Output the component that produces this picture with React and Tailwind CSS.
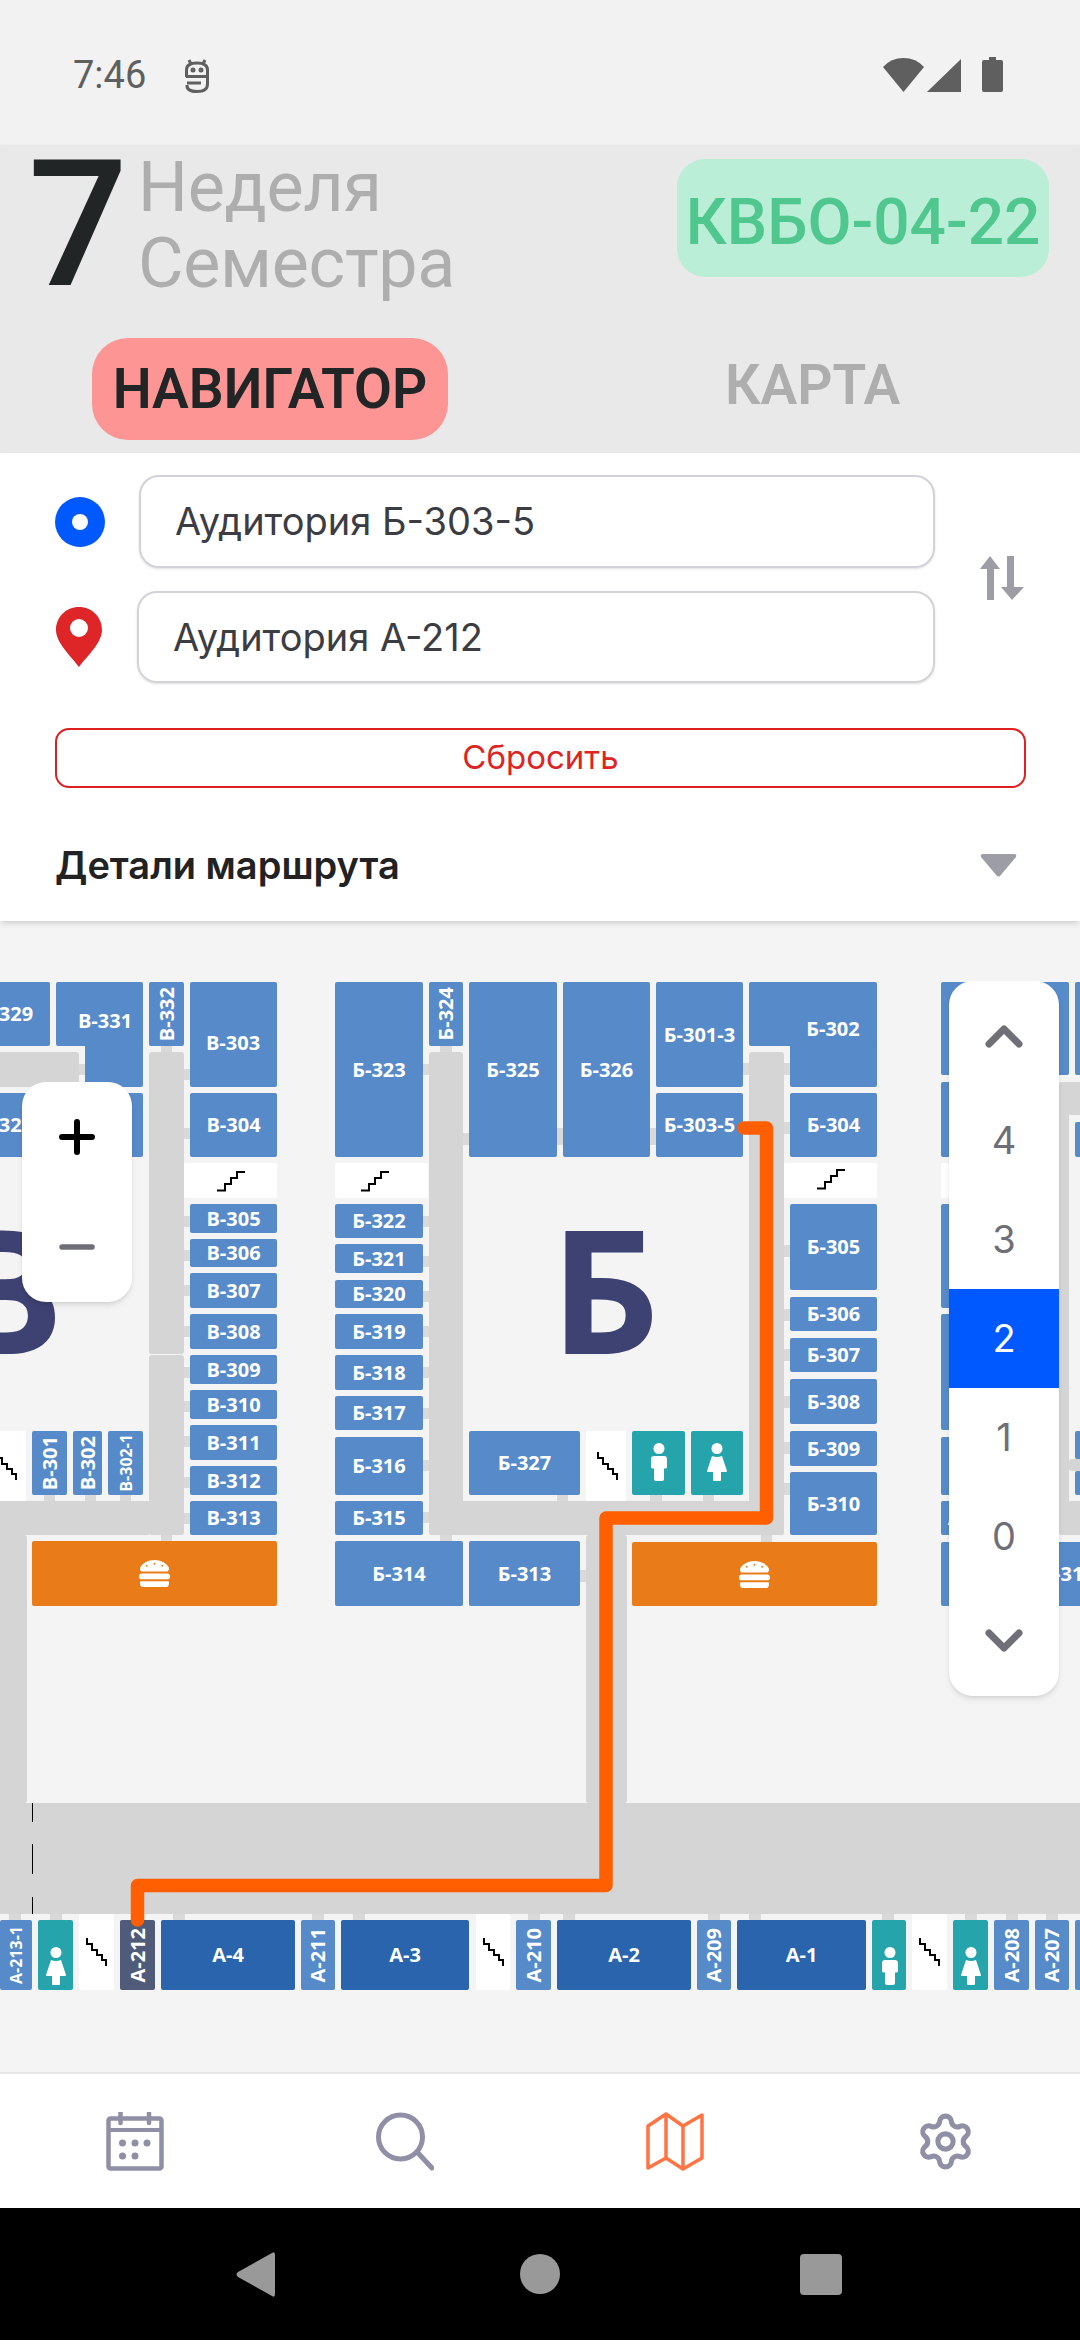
import React from 'react';
import { Settings } from 'lucide-react';
import { FaHamburger } from 'react-icons/fa';

// all map data is in screen coordinates, MAP_TOP is subtracted when drawing
const MAP_TOP = 921;

const corridors = [
  [-10, 1052, 79, 1087],
  [149, 1052, 184, 1354],
  [149, 1355, 184, 1535],
  [-10, 1501, 150, 1535],
  [-10, 1535, 27, 1803],
  [429, 1052, 463, 1535],
  [429, 1501, 784, 1535],
  [749, 1052, 784, 1535],
  [586, 1535, 627, 1803],
  [-10, 1803, 1090, 1914],
  [1059, 1082, 1069, 1535],
  [1059, 1082, 1090, 1115],
  [1059, 1501, 1090, 1535],
  [1069, 1459, 1090, 1471],
];

// door stubs between rooms and corridors
const stubs = [
  [79, 1064, 85, 1075],
  ...[1069, 1128, 1216, 1250, 1285, 1326, 1367, 1401, 1436, 1477, 1513].map((y) => [184, y, 190, y + 11]),
  [161, 1046, 172, 1052], [161, 1535, 172, 1541],
  [44, 1495, 55, 1501], [85, 1495, 96, 1501], [120, 1495, 131, 1501],
  ...[1064, 1216, 1256, 1291, 1326, 1367, 1408, 1460, 1512].map((y) => [423, y, 429, y + 11]),
  [440, 1046, 452, 1052], [440, 1535, 452, 1541],
  [463, 1133, 469, 1145], [557, 1128, 563, 1145], [650, 1128, 656, 1145],
  [557, 1495, 568, 1501], [580, 1570, 586, 1582],
  [743, 1063, 749, 1075], [743, 1122, 749, 1134],
  ...[1063, 1122, 1245, 1309, 1349, 1396, 1442, 1483].map((y) => [784, y, 790, y + 12]),
  [761, 1535, 772, 1542], [650, 1495, 662, 1501], [703, 1495, 714, 1501],
  ...[9, 50, 173, 312, 353, 528, 563, 708, 749, 882, 965, 1006, 1046].map((x) => [x, 1914, x + 12, 1920]),
];

const rooms = [
  [-38, 982, 50, 1046, 'В-329'],
  [56, 982, 143, 1046],
  [85, 1040, 143, 1087],
  [149, 982, 184, 1046, 'В-332', 'v'],
  [190, 982, 277, 1087],
  [-38, 1093, 50, 1157, 'В-328'],
  [56, 1093, 143, 1157],
  [190, 1093, 277, 1157, 'В-304'],
  [190, 1204, 277, 1233, 'В-305'],
  [190, 1239, 277, 1267, 'В-306'],
  [190, 1273, 277, 1308, 'В-307'],
  [190, 1314, 277, 1349, 'В-308'],
  [190, 1355, 277, 1384, 'В-309'],
  [190, 1390, 277, 1419, 'В-310'],
  [190, 1425, 277, 1460, 'В-311'],
  [190, 1466, 277, 1495, 'В-312'],
  [190, 1501, 277, 1535, 'В-313'],
  [32, 1431, 67, 1495, 'В-301', 'v'],
  [73, 1431, 102, 1495, 'В-302', 'v'],
  [108, 1431, 143, 1495, 'В-302-1', 'vs'],

  [335, 982, 423, 1157, 'Б-323'],
  [429, 982, 463, 1046, 'Б-324', 'v'],
  [469, 982, 557, 1157, 'Б-325'],
  [563, 982, 650, 1157, 'Б-326'],
  [656, 982, 743, 1087, 'Б-301-3'],
  [656, 1093, 743, 1157, 'Б-303-5'],
  [335, 1204, 423, 1238, 'Б-322'],
  [335, 1244, 423, 1273, 'Б-321'],
  [335, 1280, 423, 1308, 'Б-320'],
  [335, 1314, 423, 1349, 'Б-319'],
  [335, 1355, 423, 1390, 'Б-318'],
  [335, 1396, 423, 1430, 'Б-317'],
  [335, 1437, 423, 1495, 'Б-316'],
  [335, 1501, 423, 1535, 'Б-315'],
  [335, 1541, 463, 1606, 'Б-314'],
  [469, 1541, 580, 1606, 'Б-313'],
  [469, 1431, 580, 1495, 'Б-327'],
  [749, 982, 877, 1046],
  [790, 1040, 877, 1087],
  [790, 1093, 877, 1157, 'Б-304'],
  [790, 1204, 877, 1290, 'Б-305'],
  [790, 1297, 877, 1331, 'Б-306'],
  [790, 1338, 877, 1372, 'Б-307'],
  [790, 1379, 877, 1424, 'Б-308'],
  [790, 1431, 877, 1466, 'Б-309'],
  [790, 1472, 877, 1535, 'Б-310'],

  // right building, mostly behind the floor picker
  [941, 982, 1069, 1075],
  [1075, 982, 1090, 1075],
  [941, 1082, 1059, 1157],
  [1075, 1122, 1090, 1157],
  [941, 1204, 1059, 1308],
  [941, 1314, 1059, 1430],
  [941, 1437, 1059, 1495],
  [1075, 1431, 1090, 1459],
  [1075, 1471, 1090, 1495],
  [941, 1501, 1009, 1535, 'А-314'],
  [941, 1542, 1194, 1606, 'А-315'],

  [0, 1920, 32, 1990, 'А-213-1', 'vs'],
  [301, 1920, 335, 1990, 'А-211', 'v'],
  [516, 1920, 551, 1990, 'А-210', 'v'],
  [697, 1920, 731, 1990, 'А-209', 'v'],
  [994, 1920, 1029, 1990, 'А-208', 'v'],
  [1035, 1920, 1069, 1990, 'А-207', 'v'],
  [1075, 1920, 1110, 1990],
];

const darkRooms = [
  [161, 295, 'А-4'],
  [341, 469, 'А-3'],
  [557, 691, 'А-2'],
  [737, 866, 'А-1'],
];

const stairs = [
  [184, 1163, 277, 1198, 'up', 217, 1170],
  [335, 1163, 428, 1198, 'up', 361, 1170],
  [784, 1163, 877, 1198, 'up', 817, 1168],
  [941, 1163, 949, 1198],
  [-20, 1431, 26, 1501, 'down', -4, 1452],
  [586, 1431, 626, 1501, 'down', 597, 1452],
  [79, 1914, 114, 1990, 'down', 86, 1938],
  [476, 1914, 510, 1990, 'down', 483, 1938],
  [912, 1914, 947, 1990, 'down', 919, 1938],
];

const toilets = [
  [632, 1431, 685, 1495, 'm', 651, 1443],
  [691, 1431, 743, 1495, 'f', 707, 1443],
  [38, 1920, 73, 1990, 'f', 46, 1947],
  [872, 1920, 906, 1990, 'm', 882, 1947],
  [953, 1920, 988, 1990, 'f', 961, 1947],
];

const box = (x1, y1, x2, y2) => ({ left: x1, top: y1 - MAP_TOP, width: x2 - x1, height: y2 - y1 });

const RoomLabel = ({ text, mode }) => {
  if (mode === 'v' || mode === 'vs') {
    return (
      <span className={`[writing-mode:vertical-rl] rotate-180 whitespace-nowrap font-bold leading-none ${mode === 'vs' ? 'text-[16px]' : 'text-[20px]'}`}>
        {text}
      </span>
    );
  }
  return <span className="whitespace-nowrap text-[20px] font-bold leading-none">{text}</span>;
};

const Room = ({ x1, y1, x2, y2, label, mode, color = 'bg-[#578ac9]' }) => (
  <div className={`absolute flex items-center justify-center rounded-[2px] text-white ${color}`} style={box(x1, y1, x2, y2)}>
    {label && <RoomLabel text={label} mode={mode} />}
  </div>
);

const FloatingLabel = ({ cx, cy, text }) => (
  <div className="absolute flex h-[30px] w-[120px] items-center justify-center text-white" style={{ left: cx - 60, top: cy - MAP_TOP - 15 }}>
    <RoomLabel text={text} />
  </div>
);

const StairsUp = () => (
  <svg width="28" height="22" viewBox="0 0 28 22" fill="none" stroke="#000" strokeWidth="2">
    <path d="M0 20.5H8V14H14V8H20V2H28" />
  </svg>
);

const StairsDown = () => (
  <svg width="22" height="28" viewBox="0 0 22 28" fill="none" stroke="#000" strokeWidth="2">
    <path d="M1 0V6H6V12H11V17H16V22H20V28" />
  </svg>
);

const Male = () => (
  <svg width="16" height="38" viewBox="0 0 16 38" fill="#fff">
    <circle cx="8" cy="5.5" r="5.5" />
    <path d="M3 13H13Q16 13 16 16V24Q16 25.5 14 25.5H13V36Q13 38 11 38H5Q3 38 3 36V25.5H2Q0 25.5 0 24V16Q0 13 3 13Z" />
  </svg>
);

const Female = () => (
  <svg width="20" height="38" viewBox="0 0 20 38" fill="#fff">
    <circle cx="10" cy="5.5" r="5.5" />
    <path d="M5 13Q10 15 15 13L20 28Q20 29 19 29H14V37Q14 38 13 38H7Q6 38 6 37V29H1Q0 29 0 28Z" />
  </svg>
);

const Map3rdFloor = () => (
  <>
    {corridors.map(([x1, y1, x2, y2], i) => (
      <div key={`c${i}`} className="absolute rounded-[3px] bg-[#d5d5d5]" style={box(x1, y1, x2, y2)} />
    ))}
    {stubs.map(([x1, y1, x2, y2], i) => (
      <div key={`s${i}`} className="absolute bg-[#d9d9d9]" style={box(x1, y1, x2, y2)} />
    ))}

    {/* dashed wall on the left of the main hall */}
    <div className="absolute left-[32px] top-[882px] h-[19px] w-px bg-black" />
    <div className="absolute left-[32px] top-[923px] h-[30px] w-px bg-black" />
    <div className="absolute left-[32px] top-[976px] h-[17px] w-px bg-black" />

    <div className="absolute top-[303px] right-[1016px] whitespace-nowrap text-[172px] font-bold leading-[126px] text-[#3e4272]">В</div>
    <div className="absolute top-[303px] left-[550px] whitespace-nowrap text-[172px] font-bold leading-[126px] text-[#3e4272]">Б</div>

    {rooms.map(([x1, y1, x2, y2, label, mode], i) => (
      <Room key={`r${i}`} x1={x1} y1={y1} x2={x2} y2={y2} label={label} mode={mode} />
    ))}
    <FloatingLabel cx={105} cy={1021} text="В-331" />
    <FloatingLabel cx={233} cy={1043} text="В-303" />
    <FloatingLabel cx={833} cy={1029} text="Б-302" />

    {darkRooms.map(([x1, x2, label]) => (
      <Room key={label} x1={x1} y1={1920} x2={x2} y2={1990} label={label} color="bg-[#2964ac]" />
    ))}
    <Room x1={120} y1={1920} x2={155} y2={1990} label="А-212" mode="v" color="bg-[#4f5b78]" />

    {stairs.map(([x1, y1, x2, y2, dir, ix, iy], i) => (
      <div key={`st${i}`} className="absolute rounded-[2px] bg-white" style={box(x1, y1, x2, y2)}>
        {dir && (
          <div className="absolute" style={{ left: ix - x1, top: iy - y1 }}>
            {dir === 'up' ? <StairsUp /> : <StairsDown />}
          </div>
        )}
      </div>
    ))}

    {toilets.map(([x1, y1, x2, y2, kind, ix, iy], i) => (
      <div key={`t${i}`} className="absolute rounded-[2px] bg-[#25a5ab]" style={box(x1, y1, x2, y2)}>
        <div className="absolute flex" style={{ left: ix - x1, top: iy - y1 }}>
          {kind === 'm' ? <Male /> : <Female />}
        </div>
      </div>
    ))}

    <div className="absolute left-[32px] top-[620px] flex h-[65px] w-[245px] items-center justify-center rounded-[2px] bg-[#e97c18] text-white">
      <FaHamburger size={31} />
    </div>
    <div className="absolute left-[632px] top-[621px] flex h-[64px] w-[245px] items-center justify-center rounded-[2px] bg-[#e97c18] text-white">
      <FaHamburger size={31} />
    </div>

    {/* route */}
    <svg className="absolute left-0 top-0" width="1080" height="1151" viewBox="0 921 1080 1151" fill="none">
      <path
        d="M744 1128H766.5V1518H606V1885.5H137.5V1920"
        stroke="#ff5f00"
        strokeWidth="13.5"
        strokeLinecap="round"
        strokeLinejoin="round"
      />
    </svg>
  </>
);

const ZoomControl = () => (
  <div className="absolute left-[22px] top-[161px] flex h-[220px] w-[110px] flex-col items-center rounded-[24px] bg-white shadow-md">
    <svg className="mt-[37px]" width="36" height="36" viewBox="0 0 36 36" stroke="#000" strokeWidth="6" strokeLinecap="round">
      <path d="M3 18H33M18 3V33" />
    </svg>
    <svg className="mt-[89px]" width="36" height="6" viewBox="0 0 36 6" stroke="#6f6f78" strokeWidth="5.5" strokeLinecap="round">
      <path d="M3 3H33" />
    </svg>
  </div>
);

const FloorPicker = () => (
  <div className="absolute left-[949px] top-[60px] flex w-[110px] flex-col rounded-[24px] bg-white font-['Inter',sans-serif] shadow-md">
    <div className="flex h-[110px] items-center justify-center">
      <svg width="38" height="24" viewBox="0 0 38 24" fill="none" stroke="#6f6f78" strokeWidth="7" strokeLinecap="round" strokeLinejoin="round">
        <path d="M4 20L19 5L34 20" />
      </svg>
    </div>
    {[4, 3, 2, 1, 0].map((floor) => (
      <div
        key={floor}
        className={`flex h-[99px] items-center justify-center text-[38px] ${floor === 2 ? 'bg-[#0059ff] text-white' : 'text-[#6f6f78]'}`}
      >
        {floor}
      </div>
    ))}
    <div className="flex h-[110px] items-center justify-center">
      <svg width="38" height="24" viewBox="0 0 38 24" fill="none" stroke="#6f6f78" strokeWidth="7" strokeLinecap="round" strokeLinejoin="round">
        <path d="M4 4L19 19L34 4" />
      </svg>
    </div>
  </div>
);

const StatusBar = () => (
  <div className="flex h-[145px] items-start justify-between bg-[#f2f2f2] pl-[73px] pr-[77px] pt-[57px]">
    <div className="flex items-center">
      <span className="text-[38px] leading-[36px] text-[#5f5f5f]">7:46</span>
      <svg className="ml-[38px]" width="26" height="35" viewBox="0 0 26 35" fill="none" stroke="#5f5f5f" strokeWidth="3">
        <path d="M5 2L7 6M21 2L19 6" />
        <path d="M2.5 19V12Q2.5 5 13 5T23.5 12V26Q23.5 33.5 13 33.5T3 27" />
        <path d="M2 18.5H23" />
        <path d="M3 25H17" />
        <circle cx="9" cy="12" r="1" fill="#5f5f5f" />
        <circle cx="17" cy="12" r="1" fill="#5f5f5f" />
      </svg>
    </div>
    <div className="flex items-end">
      <svg width="41" height="34" viewBox="0 0 41 34" fill="#5f5f5f">
        <path d="M20.5 34L0 9Q8 0 20.5 0T41 9Z" />
      </svg>
      <svg className="ml-[3px]" width="34" height="33" viewBox="0 0 34 33" fill="#5f5f5f">
        <path d="M34 0V33H0Z" />
      </svg>
      <svg className="ml-[21px]" width="21" height="35" viewBox="0 0 21 35" fill="#5f5f5f">
        <path d="M7 0H14V3H19Q21 3 21 5V33Q21 35 19 35H2Q0 35 0 33V5Q0 3 2 3H7Z" />
      </svg>
    </div>
  </div>
);

const Header = () => (
  <div className="relative z-10 h-[308px] bg-[#e9e9e9] shadow-sm">
    <div className="flex items-start justify-between pl-[28px] pr-[31px]">
      <div className="flex">
        <div className="mt-[18px] text-[176px] font-medium leading-[125px] text-[#212525]">7</div>
        <div className="ml-[10px] mt-[4px] text-[70px] leading-[76px] tracking-[-0.3px] text-[#aeaeae]">
          <div>Неделя</div>
          <div>Семестра</div>
        </div>
      </div>
      <div className="mt-[14px] flex h-[118px] w-[372px] items-center justify-center rounded-[28px] bg-[#baeed7] pt-[10px] text-[64px] font-medium leading-none text-[#4fc78f]">
        КВБО-04-22
      </div>
    </div>
    <div className="relative mt-[37px] flex items-center">
      <div className="ml-[92px] flex h-[102px] w-[356px] items-center justify-center rounded-[36px] bg-[#fd9595] text-[55px] font-semibold leading-none text-[#212525]">
        НАВИГАТОР
      </div>
      <div className="ml-[277px] -translate-y-[4px] text-[55px] font-semibold leading-none text-[#aeaeae]">КАРТА</div>
    </div>
  </div>
);

const RouteForm = () => (
  <div className="relative z-10 h-[468px] bg-white px-[55px] font-['Inter',sans-serif] shadow-md">
    <div className="flex">
      <div className="w-[880px]">
        <div className="mt-[22px] flex items-center">
          <div className="flex h-[50px] w-[50px] items-center justify-center rounded-full bg-[#0059ff]">
            <div className="h-[16px] w-[16px] rounded-full bg-white" />
          </div>
          <div className="ml-[34px] flex h-[93px] w-[796px] items-center rounded-[20px] border-2 border-[#d2d2d8] pl-[34px] text-[38px] text-[#3c3c43] shadow-sm">
            Аудитория Б-303-5
          </div>
        </div>
        <div className="mt-[23px] flex items-center">
          <svg className="ml-px" width="46" height="60" viewBox="0 0 46 60">
            <path d="M23 0C10 0 0 10 0 23C0 36 15 49 23 60C31 49 46 36 46 23C46 10 36 0 23 0Z" fill="#de2528" />
            <circle cx="23" cy="21" r="9" fill="#fff" />
          </svg>
          <div className="ml-[35px] flex h-[92px] w-[798px] items-center rounded-[20px] border-2 border-[#d2d2d8] pl-[34px] text-[38px] text-[#3c3c43] shadow-sm">
            Аудитория А-212
          </div>
        </div>
      </div>
      <svg className="ml-[44px] mt-[103px]" width="46" height="44" viewBox="0 0 46 44" fill="#9d9da5">
        <path d="M11 0L21 13H15V44H8V13H1Z" />
        <path d="M28 0H35V31H45L33 44L22 31H28Z" />
      </svg>
    </div>
    <div className="mt-[45px] flex h-[60px] w-[971px] items-center justify-center rounded-[14px] border-2 border-[#e02020] text-[33px] text-[#de2323]">
      Сбросить
    </div>
    <div className="mt-[52px] flex w-[962px] items-center justify-between">
      <span className="text-[38px] font-semibold leading-[50px] text-[#222]">Детали маршрута</span>
      <svg width="37" height="23" viewBox="0 0 37 23" fill="#9d9da5">
        <path d="M3 0H34Q37 0 36 3L20 22Q18.5 23 17 22L1 3Q0 0 3 0Z" />
      </svg>
    </div>
  </div>
);

const BottomNav = () => (
  <div className="relative flex h-[136px] border-t-2 border-[#e6e6e6] bg-white">
    <svg className="absolute left-[106px] top-[38px]" width="58" height="59" viewBox="0 0 58 59" fill="none" stroke="#8f8fa5" strokeWidth="4.5">
      <rect x="2.5" y="6.5" width="53" height="50" rx="2" />
      <path d="M2 18H56" strokeWidth="4" />
      <path d="M14.5 1V11M43 1V11" strokeLinecap="round" />
      <g fill="#8f8fa5" stroke="none">
        <circle cx="16.5" cy="31" r="3.5" />
        <circle cx="29" cy="31" r="3.5" />
        <circle cx="41" cy="31" r="3.5" />
        <circle cx="16.5" cy="44" r="3.5" />
        <circle cx="29" cy="44" r="3.5" />
      </g>
    </svg>
    <svg className="absolute left-[376px] top-[38px]" width="58" height="59" viewBox="0 0 58 59" fill="none" stroke="#8f8fa5" strokeWidth="5" strokeLinecap="round">
      <circle cx="24.5" cy="25" r="22" />
      <path d="M42 41L56 56" />
    </svg>
    <svg className="absolute left-[646px] top-[38px]" width="58" height="59" viewBox="0 0 58 59" fill="none" stroke="#ff7443" strokeWidth="3.5" strokeLinejoin="round">
      <path d="M2 14L20 2L37 14L56 3V46L37 57L20 46L2 56Z" />
      <path d="M20 2V46M37 14V57" />
    </svg>
    <Settings className="absolute left-[915px] top-[37px] text-[#8f8fa5]" size={61} strokeWidth={2} />
  </div>
);

const SystemNav = () => (
  <div className="relative h-[132px] bg-black">
    <svg className="absolute left-[236px] top-[44px]" width="39" height="45" viewBox="0 0 39 45" fill="#999">
      <path d="M36 1Q39 -1 39 3V42Q39 46 36 44L2 25Q-1 22.5 2 20Z" />
    </svg>
    <div className="absolute left-[520px] top-[46px] h-[40px] w-[40px] rounded-full bg-[#999]" />
    <div className="absolute left-[800px] top-[46px] h-[41px] w-[42px] rounded-[4px] bg-[#999]" />
  </div>
);

const App = () => (
  <div className="h-[2340px] w-[1080px] overflow-hidden bg-[#f4f4f4] font-['Roboto',sans-serif]">
    <StatusBar />
    <Header />
    <RouteForm />
    <div className="relative h-[1151px] overflow-hidden font-['Open_Sans',sans-serif]">
      <Map3rdFloor />
      <ZoomControl />
      <FloorPicker />
    </div>
    <BottomNav />
    <SystemNav />
  </div>
);

export default App;
